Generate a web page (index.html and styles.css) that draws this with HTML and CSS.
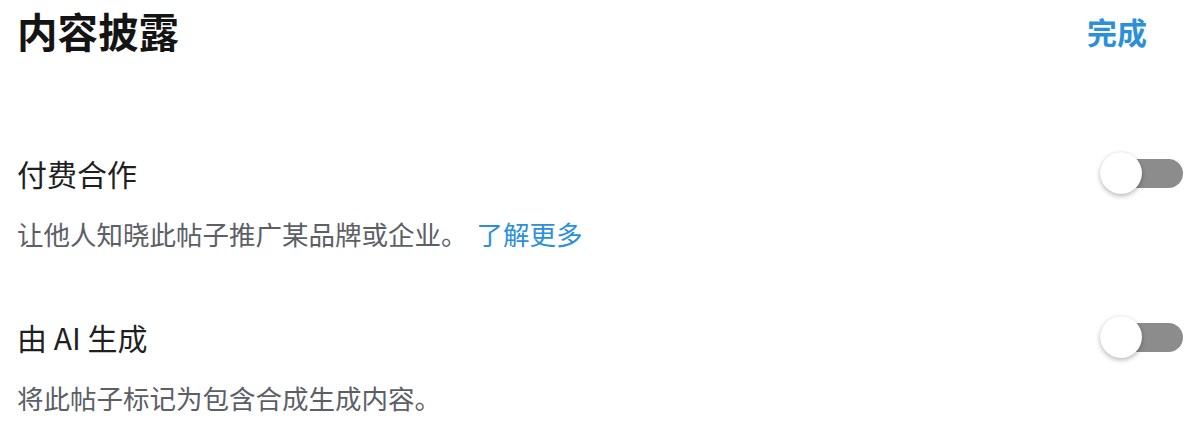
FILE: index.html
```html
<!DOCTYPE html>
<html lang="zh-CN">
<head>
<meta charset="utf-8">
<title>内容披露</title>
<link rel="stylesheet" href="styles.css">
</head>
<body>
<div class="sheet">
  <header class="sheet-header">
    <h1 class="sheet-title">内容披露</h1>
    <button class="done-btn" type="button">完成</button>
  </header>

  <section class="option option-first">
    <div class="option-row">
      <span class="option-label">付费合作</span>
      <span class="switch" role="switch" aria-checked="false"><span class="switch-thumb"></span></span>
    </div>
    <p class="option-desc">让他人知晓此帖子推广某品牌或企业。 <a class="learn-more" href="#">了解更多</a></p>
  </section>

  <section class="option">
    <div class="option-row">
      <span class="option-label">由 AI 生成</span>
      <span class="switch" role="switch" aria-checked="false"><span class="switch-thumb"></span></span>
    </div>
    <p class="option-desc">将此帖子标记为包含合成生成内容。</p>
  </section>
</div>
</body>
</html>
```

FILE: styles.css
```css
html, body {
  margin: 0;
  padding: 0;
  background: #ffffff;
}

body {
  font-family: "Noto Sans CJK SC", "Noto Sans", sans-serif;
  color: #1c1c1c;
}

.sheet {
  padding: 0 17px 0 17px;
}

.sheet-header {
  display: flex;
  align-items: center;
  justify-content: space-between;
  height: 62px;
}

.sheet-title {
  margin: 0;
  font-size: 40.5px;
  font-weight: 700;
  line-height: 62px;
  color: #141414;
}

.done-btn {
  border: 0;
  background: none;
  padding: 0 36px 0 0;
  margin: 0;
  font-family: inherit;
  font-size: 30px;
  font-weight: 700;
  line-height: 62px;
  color: #2b8fdc;
  cursor: pointer;
}

.option {
  margin-top: 65px;
}

.option-first {
  margin-top: 91px;
}

.option-row {
  display: flex;
  align-items: center;
  justify-content: space-between;
  height: 40px;
}

.option-label {
  font-size: 30px;
  line-height: 40px;
  color: #1f1f1f;
}

.option-desc {
  margin: 23px 0 0 0;
  font-size: 26.5px;
  line-height: 36px;
  color: #5c6066;
}

.learn-more {
  color: #2b8fdc;
  text-decoration: none;
  margin-left: 3px;
}

.switch {
  position: relative;
  display: block;
  width: 70px;
  height: 29px;
  border-radius: 15px;
  background: #8c8c8c;
}

.switch-thumb {
  position: absolute;
  left: -13px;
  top: 50%;
  width: 42px;
  height: 42px;
  margin-top: -21px;
  border-radius: 50%;
  background: #ffffff;
  box-shadow: 0 2px 5px rgba(0, 0, 0, 0.28), 0 0 1px rgba(0, 0, 0, 0.12);
}
```
